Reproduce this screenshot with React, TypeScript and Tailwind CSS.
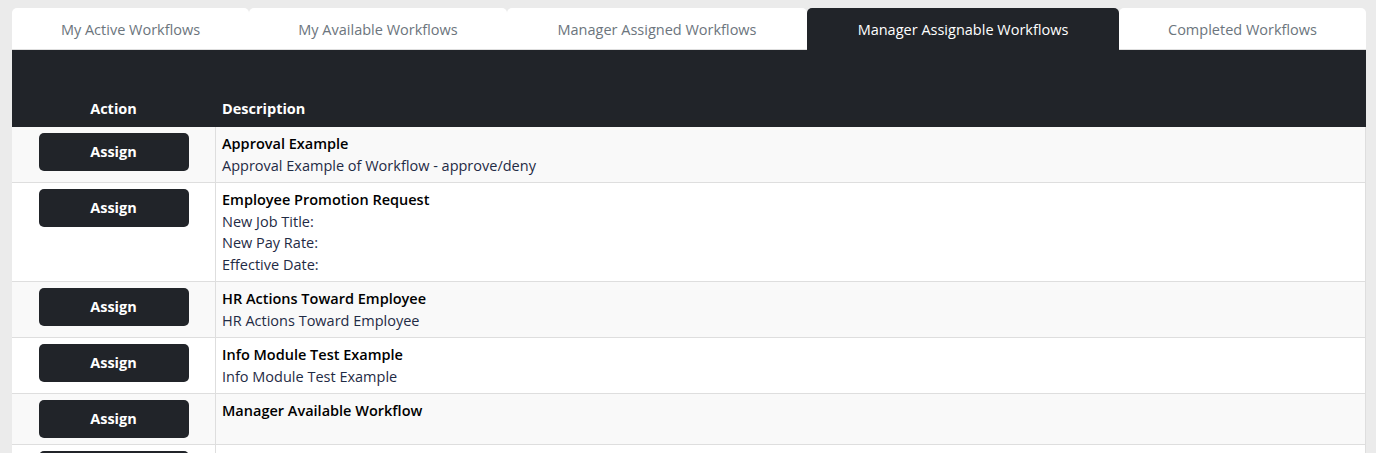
import React from 'react';

const tabs = [
  { label: 'My Active Workflows', w: 'w-[237px]' },
  { label: 'My Available Workflows', w: 'w-[258px]' },
  { label: 'Manager Assigned Workflows', w: 'w-[300px]' },
  { label: 'Manager Assignable Workflows', w: 'w-[312px]', active: true },
  { label: 'Completed Workflows', w: 'flex-1' },
];

const rows: { title: string; lines: string[] }[] = [
  { title: 'Approval Example', lines: ['Approval Example of Workflow - approve/deny'] },
  { title: 'Employee Promotion Request', lines: ['New Job Title:', 'New Pay Rate:', 'Effective Date:'] },
  { title: 'HR Actions Toward Employee', lines: ['HR Actions Toward Employee'] },
  { title: 'Info Module Test Example', lines: ['Info Module Test Example'] },
  { title: 'Manager Available Workflow', lines: [] },
  { title: 'Manager Only Workflow', lines: [] },
];

const App: React.FC = () => {
  return (
    <div
      className="h-screen overflow-hidden bg-[#ebebeb] pt-2 pl-3 pr-[10px] text-[14.5px]"
      style={{ fontFamily: '"Open Sans", "Liberation Sans", sans-serif' }}
    >
      <div className="w-[1354px]">
        {/* tabs */}
        <div className="flex h-[42px]">
          {tabs.map((t) => (
            <div
              key={t.label}
              className={`${t.w} flex items-center justify-center rounded-t-[5px] pt-[2px] ${
                t.active ? 'bg-[#212429] text-white' : 'bg-white text-[#6c757d] border-b border-[#dedede]'
              }`}
            >
              {t.label}
            </div>
          ))}
        </div>

        {/* header */}
        <div className="flex h-[77px] items-end bg-[#212429] pb-[7px] font-bold text-white">
          <div className="w-[203px] text-center">Action</div>
          <div className="pl-[7px]">Description</div>
        </div>

        {/* rows */}
        <div className="border-r border-[#dedede]">
          {rows.map((r, i) => (
            <div
              key={r.title}
              className={`flex border-b border-[#dedede] ${i % 2 === 0 ? 'bg-[#f9f9f9]' : 'bg-white'}`}
            >
              <div className="flex w-[204px] shrink-0 justify-center border-r border-[#dedede] py-[6px]">
                <button className="h-[38px] w-[150px] rounded-[5px] bg-[#212429] font-bold text-white">
                  Assign
                </button>
              </div>
              <div className="py-[6px] pl-[6px] leading-[21.5px]">
                <div className="font-semibold text-black">{r.title}</div>
                {r.lines.map((l) => (
                  <div key={l} className="text-[#1f2b45]">
                    {l}
                  </div>
                ))}
              </div>
            </div>
          ))}
        </div>
      </div>
    </div>
  );
};

export default App;
